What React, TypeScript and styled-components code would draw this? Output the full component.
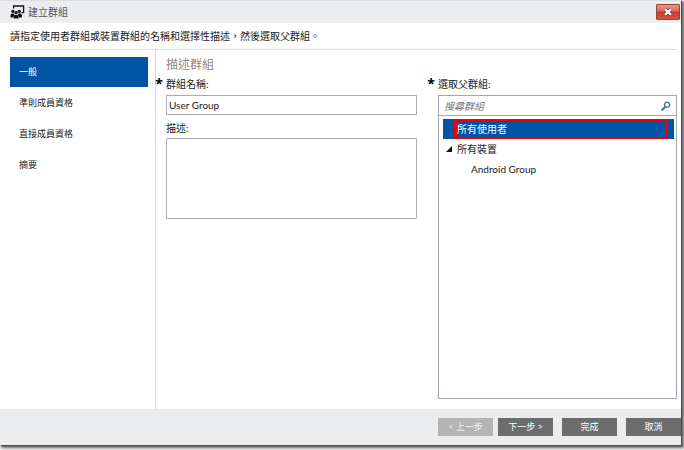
import React, { useState } from "react";
import styled, { createGlobalStyle } from "styled-components";

const GlobalStyle = createGlobalStyle`
  * { box-sizing: border-box; }
  body { margin: 0; background: #fff; }
  body, button, input, textarea {
    font-family: Lato, "Noto Sans CJK TC", sans-serif;
    font-size: 10px;
    line-height: 14px;
    color: #1a1a1a;
  }
`;

const Screen = styled.div`
  display: flex;
  height: 100vh;
  padding: 0 3px 5px 0;
  overflow: hidden;
`;

const Dialog = styled.section`
  flex: 1;
  min-width: 0;
  display: flex;
  flex-direction: column;
  background: #fff;
  box-shadow: 1px 1px 0 #4a4a4a, 2px 2px 3px 1px #555;
`;

const TitleBar = styled.header`
  display: flex;
  align-items: center;
  gap: 3px;
  height: 23px;
  padding: 0 1px 0 10px;
  background: #ecedef;
  border-top: 1px solid #dcdddf;
`;

const Title = styled.h1`
  flex: 1;
  margin: 0;
  font-size: 10px;
  font-weight: 400;
  color: #555;
`;

const CloseButton = styled.button`
  display: flex;
  align-items: center;
  justify-content: center;
  width: 24px;
  height: 16px;
  padding: 0;
  border: 1px solid #96453c;
  border-radius: 1px;
  background: linear-gradient(#e69a8e 0%, #d9685a 45%, #c23a2a 50%, #d4543f 100%);
`;

const Intro = styled.p`
  margin: 0 4px 0 10px;
  padding: 6px 0;
  height: 27px;
  border-bottom: 1px solid #dcdcdc;
`;

const Body = styled.div`
  flex: 1;
  min-height: 0;
  display: flex;
`;

const Steps = styled.nav`
  display: flex;
  flex-direction: column;
  gap: 1px;
  width: 156px;
  padding: 7px 7px 0 10px;
  border-right: 1px solid #d4d5d8;
`;

const Step = styled.button<{ $active: boolean }>`
  height: 30px;
  padding: 0 9px;
  border: 0;
  text-align: left;
  font-size: 9px;
  background: ${(p) => (p.$active ? "#0054a6" : "transparent")};
  color: ${(p) => (p.$active ? "#fff" : "#1a1a1a")};
`;

const Content = styled.main`
  flex: 1;
  min-width: 0;
  display: grid;
  grid-template-columns: 251fr 239fr;
  column-gap: 21px;
  grid-template-rows: auto 1fr;
  padding: 6px 4px 10px 10px;
`;

const Heading = styled.h2`
  grid-column: 1 / -1;
  margin: 0;
  font-size: 12px;
  line-height: 18px;
  font-weight: 400;
  color: #888;
`;

const Column = styled.div`
  display: flex;
  flex-direction: column;
  min-width: 0;
  min-height: 0;
`;

const Label = styled.label<{ $spaced?: boolean }>`
  position: relative;
  height: 14px;
  margin: ${(p) => (p.$spaced ? "6px 0 3px" : "3px 0 4px")};
`;

const Required = styled.span`
  position: absolute;
  right: 100%;
  top: 0;
  margin-right: 3px;
  font-family: "Open Sans", sans-serif;
  font-size: 14px;
  line-height: 14px;
  font-weight: 700;
  color: #000;
`;

const TextInput = styled.input`
  width: 100%;
  height: 20px;
  padding: 0 2px;
  border: 1px solid #a9abb5;
  outline: 0;
  background: #fff;
`;

const TextArea = styled.textarea`
  width: 100%;
  height: 81px;
  border: 1px solid #a9abb5;
  border-radius: 1px;
  outline: 0;
  resize: none;
`;

const Picker = styled.div`
  flex: 1;
  min-height: 0;
  display: flex;
  flex-direction: column;
  border: 1px solid #a4a8b2;
`;

const SearchRow = styled.div`
  display: flex;
  align-items: center;
  height: 20px;
  padding: 0 5px;
  border-bottom: 1px solid #a9adb7;
`;

const SearchInput = styled.input`
  flex: 1;
  min-width: 0;
  padding: 0;
  border: 0;
  outline: 0;
  background: transparent;
  font-style: italic;
  &::placeholder { color: #777; opacity: 1; }
`;

const IconButton = styled.button`
  display: flex;
  padding: 0;
  border: 0;
  background: transparent;
`;

const Tree = styled.ul`
  flex: 1;
  margin: 0;
  padding: 3px 2px 0 4px;
  list-style: none;
`;

const TreeRow = styled.li<{ $selected?: boolean }>`
  display: flex;
  height: 20px;
  background: ${(p) => (p.$selected ? "#0054a6" : "transparent")};
`;

const Toggle = styled.span`
  display: flex;
  align-items: center;
  justify-content: center;
  width: 11px;
`;

const TreeItem = styled.button<{ $marked?: boolean; $level?: number }>`
  flex: 1;
  margin: 0 6px 0 0;
  padding: 0 0 0 ${(p) => (p.$level ? 14 : 0)}px;
  border: solid ${(p) => (p.$marked ? "#f00000" : "transparent")};
  border-width: 2px 3px;
  line-height: 14px;
  text-align: left;
  background: transparent;
  color: ${(p) => (p.$marked ? "#fff" : "#1a1a1a")};
`;

const Footer = styled.footer`
  display: flex;
  justify-content: flex-end;
  gap: 9px;
  padding: 9px 0;
  background: #ebecee;
`;

const ButtonPair = styled.div`
  display: flex;
  gap: 5px;
`;

const ActionButton = styled.button`
  width: 55px;
  height: 18px;
  padding: 0;
  border: 0;
  font-size: 9px;
  background: #6d6d6d;
  color: #fff;
  &:disabled { background: #b4b4b4; color: #f2f2f2; }
`;

const GroupIcon = () => (
  <svg width="15" height="14" viewBox="0 0 15 14" aria-hidden="true">
    <path d="M3.6 3.4V1h10v6.6H11.4" fill="none" stroke="#111" strokeWidth="1.3" />
    <g fill="#111">
      <circle cx="2.9" cy="6.3" r="1.6" />
      <circle cx="9.3" cy="6.3" r="1.6" />
      <circle cx="6.1" cy="7.7" r="1.6" />
      <path d="M.5 12.4V9.9q0-1.5 1.6-1.5h1.6l.9 1.5-1.5 2.5zM11.9 12.4V9.9q0-1.5-1.6-1.5H8.6l-.9 1.5 1.5 2.5z" />
      <path d="M3.7 13.6v-2q0-1.7 1.5-1.7H7q1.5 0 1.5 1.7v2z" />
    </g>
  </svg>
);

const CloseIcon = () => (
  <svg width="10" height="8" viewBox="0 0 10 8" aria-hidden="true">
    <path d="M2 1.2l6 5.6M8 1.2L2 6.8" stroke="#7c3a33" strokeWidth="3.4" />
    <path d="M2 1.2l6 5.6M8 1.2L2 6.8" stroke="#fff" strokeWidth="2.2" />
  </svg>
);

const SearchIcon = () => (
  <svg width="10" height="10" viewBox="0 0 10 10" aria-hidden="true">
    <path d="M4.2 5.8L1.2 8.8" stroke="#2d62b3" strokeWidth="1.9" strokeLinecap="round" />
    <circle cx="6.1" cy="3.7" r="2.6" fill="#eef4fc" stroke="#3a6fbd" strokeWidth="1.3" />
  </svg>
);

const ExpandedIcon = () => (
  <svg width="6" height="6" viewBox="0 0 6 6" aria-hidden="true">
    <path d="M6 0v6H0z" fill="#111" />
  </svg>
);

const steps = ["一般", "準則成員資格", "直接成員資格", "摘要"];

export default function App() {
  const [step, setStep] = useState(0);
  const [name, setName] = useState("User Group");

  return (
    <>
      <GlobalStyle />
      <Screen>
        <Dialog aria-labelledby="dialog-title">
          <TitleBar>
            <GroupIcon />
            <Title id="dialog-title">建立群組</Title>
            <CloseButton type="button" aria-label="關閉">
              <CloseIcon />
            </CloseButton>
          </TitleBar>
          <Intro>請指定使用者群組或裝置群組的名稱和選擇性描述，然後選取父群組。</Intro>
          <Body>
            <Steps>
              {steps.map((label, i) => (
                <Step key={label} type="button" $active={i === step} onClick={() => setStep(i)}>
                  {label}
                </Step>
              ))}
            </Steps>
            <Content>
              <Heading>描述群組</Heading>
              <Column>
                <Label htmlFor="group-name">
                  <Required>*</Required>群組名稱:
                </Label>
                <TextInput id="group-name" value={name} onChange={(e) => setName(e.target.value)} />
                <Label htmlFor="group-description" $spaced>
                  描述:
                </Label>
                <TextArea id="group-description" />
              </Column>
              <Column>
                <Label htmlFor="group-search">
                  <Required>*</Required>選取父群組:
                </Label>
                <Picker>
                  <SearchRow>
                    <SearchInput id="group-search" placeholder="搜尋群組" />
                    <IconButton type="button" aria-label="搜尋">
                      <SearchIcon />
                    </IconButton>
                  </SearchRow>
                  <Tree>
                    <TreeRow $selected>
                      <Toggle />
                      <TreeItem type="button" $marked>所有使用者</TreeItem>
                    </TreeRow>
                    <TreeRow>
                      <Toggle>
                        <ExpandedIcon />
                      </Toggle>
                      <TreeItem type="button">所有裝置</TreeItem>
                    </TreeRow>
                    <TreeRow>
                      <Toggle />
                      <TreeItem type="button" $level={1}>Android Group</TreeItem>
                    </TreeRow>
                  </Tree>
                </Picker>
              </Column>
            </Content>
          </Body>
          <Footer>
            <ButtonPair>
              <ActionButton type="button" disabled>&lt; 上一步</ActionButton>
              <ActionButton type="button">下一步 &gt;</ActionButton>
            </ButtonPair>
            <ActionButton type="button">完成</ActionButton>
            <ActionButton type="button">取消</ActionButton>
          </Footer>
        </Dialog>
      </Screen>
    </>
  );
}
